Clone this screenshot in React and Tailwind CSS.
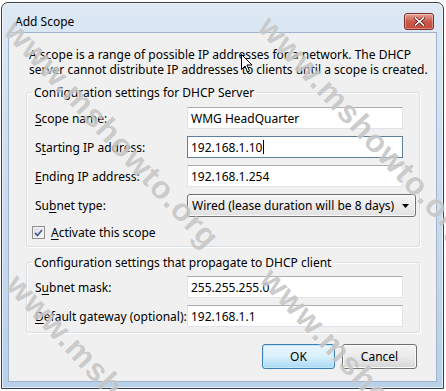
import React from 'react'

// Add Scope dialog (Windows 7 basic theme)

const Ul = ({ children }) => <span className="underline underline-offset-2">{children}</span>

const TextBox = ({ value, focused, caret }) => (
    <div
        className={
            'flex h-[22px] w-[216px] items-center bg-white pl-[3px] ' +
            (focused
                ? 'border border-[#5f7d9c]'
                : 'border border-[#e2e3ea] border-t-[#abadb3]')
        }
    >
        <span>{value}</span>
        {caret && <span className="ml-[1px] h-[14px] w-[1px] bg-black" />}
    </div>
)

const Row = ({ label, children, className = '' }) => (
    <div className={'flex items-center ' + className}>
        <div className="w-[152px]">{label}</div>
        {children}
    </div>
)

const Watermark = ({ className }) => (
    <span
        className={
            'absolute origin-top-left rotate-[47deg] whitespace-nowrap font-["Liberation_Sans",sans-serif] text-[32px] font-bold leading-none tracking-[1px] text-[#8c8c8c]/45 [text-shadow:0_0_1px_rgba(255,255,255,0.8)] ' +
            className
        }
    >
        www.mshowto.org
    </span>
)

export default function App() {
    return (
        <div className="relative h-[391px] w-[446px] overflow-hidden bg-white pl-[1px] pt-[2px] font-['Noto_Sans',sans-serif] text-[12px] leading-[15px] text-black">
            {/* window */}
            <div className="flex h-[387px] w-[443px] flex-col rounded-t-[7px] border border-[#3a3d42] bg-gradient-to-b from-[#dde8f4] via-[#cadcef] to-[#b9d0e9] shadow-[inset_0_0_0_1px_rgba(255,255,255,0.6)]">
                {/* title bar */}
                <div className="flex h-[29px] items-center justify-between pl-[13px] pr-[9px] pt-[7px]">
                    <span className="text-[12px] text-black">Add Scope</span>
                    <div className="flex h-[17px] w-[30px] items-center justify-center rounded-[3px] border border-[#7a3129] bg-gradient-to-b from-[#e6a399] via-[#c95a4c] to-[#c8483a] shadow-[inset_0_0_0_1px_rgba(255,255,255,0.35)]">
                        <svg width="11" height="9" viewBox="0 0 11 9">
                            <path d="M1.5 1 L9.5 8 M9.5 1 L1.5 8" stroke="#5b1d16" strokeWidth="3" strokeLinecap="square" />
                            <path d="M1.5 1 L9.5 8 M9.5 1 L1.5 8" stroke="#ffffff" strokeWidth="1.6" strokeLinecap="square" />
                        </svg>
                    </div>
                </div>

                {/* client area */}
                <div className="mx-[6px] flex flex-1 flex-col border border-[#9fb4cc] bg-[#f0f0f0]">
                    <p className="pl-[20px] pt-[14px]">
                        A scope is a range of possible IP addresses for a network. The DHCP
                        <br />
                        server cannot distribute IP addresses to clients until a scope is created.
                    </p>

                    <fieldset className="ml-[17px] mr-[16px] mt-[8px] rounded-[3px] border border-[#d5dfe5] pb-[6px] pt-[7px] shadow-[inset_1px_1px_0_#fff,1px_1px_0_#fff]">
                        <legend className="ml-[5px] px-[2px]">Configuration settings for DHCP Server</legend>
                        <div className="flex flex-col gap-[7px] pl-[8px]">
                            <Row label={<><Ul>S</Ul>cope name:</>}>
                                <TextBox value="WMG HeadQuarter" />
                            </Row>
                            <Row label={<>S<Ul>t</Ul>arting IP address:</>}>
                                <TextBox value="192.168.1.10" focused caret />
                            </Row>
                            <Row label={<><Ul>E</Ul>nding IP address:</>}>
                                <TextBox value="192.168.1.254" />
                            </Row>
                            <Row label={<>Su<Ul>b</Ul>net type:</>}>
                                <div className="flex h-[23px] w-[229px] items-center justify-between rounded-[3px] border border-[#707070] bg-gradient-to-b from-[#f6f6f6] via-[#ececec] to-[#e2e2e2] pl-[4px] pr-[6px] shadow-[inset_0_0_0_1px_#fcfcfc]">
                                    <span>Wired (lease duration will be 8 days)</span>
                                    <svg width="7" height="4" viewBox="0 0 7 4">
                                        <path d="M0 0 H7 L3.5 4 Z" fill="#000" />
                                    </svg>
                                </div>
                            </Row>
                        </div>
                        <div className="mt-[8px] flex items-center gap-[6px] pl-[5px]">
                            <div className="flex h-[13px] w-[13px] items-center justify-center border border-[#8e8f8f] bg-gradient-to-br from-[#dcdcdc] to-[#fbfbfb] shadow-[inset_0_0_0_1px_#f4f4f4]">
                                <svg width="9" height="8" viewBox="0 0 9 8">
                                    <path d="M1 4 L3.5 6.5 L8 1" fill="none" stroke="#4a5f97" strokeWidth="1.8" />
                                </svg>
                            </div>
                            <span>
                                <Ul>A</Ul>ctivate this scope
                            </span>
                        </div>
                    </fieldset>

                    <fieldset className="ml-[17px] mr-[16px] mt-[8px] rounded-[3px] border border-[#d5dfe5] pb-[5px] pt-[6px] shadow-[inset_1px_1px_0_#fff,1px_1px_0_#fff]">
                        <legend className="ml-[5px] px-[2px]">Configuration settings that propagate to DHCP client</legend>
                        <div className="flex flex-col gap-[7px] pl-[8px]">
                            <Row label={<>S<Ul>u</Ul>bnet mask:</>}>
                                <TextBox value="255.255.255.0" />
                            </Row>
                            <Row label={<><Ul>D</Ul>efault gateway (optional):</>}>
                                <TextBox value="192.168.1.1" />
                            </Row>
                        </div>
                    </fieldset>

                    <div className="mt-[11px] flex justify-end gap-[7px] pr-[19px]">
                        <button className="flex h-[25px] w-[73px] items-center justify-center rounded-[3px] border border-[#3c7fb1] bg-gradient-to-b from-[#eaf6fd] via-[#d9f0fc] to-[#a7d9f5] shadow-[inset_0_0_0_1px_#c5e8f9]">
                            OK
                        </button>
                        <button className="flex h-[25px] w-[75px] items-center justify-center rounded-[3px] border border-[#707070] bg-gradient-to-b from-[#f2f2f2] via-[#ebebeb] to-[#d6d6d6] shadow-[inset_0_0_0_1px_#fbfbfb]">
                            Cancel
                        </button>
                    </div>
                </div>
                <div className="h-[6px]" />
            </div>

            {/* watermark */}
            <div className="pointer-events-none absolute inset-0">
                <Watermark className="left-[22px] top-[14px]" />
                <Watermark className="left-[276px] top-[10px]" />
                <Watermark className="left-[24px] top-[268px]" />
                <Watermark className="left-[278px] top-[262px]" />
            </div>

            {/* mouse pointer */}
            <svg className="absolute left-[241px] top-[54px]" width="12" height="19" viewBox="0 0 12 19">
                <path d="M0.5 0.5 V15.5 L4 12 L6.5 18 L8.5 17 L6 11 H11 Z" fill="#fff" stroke="#000" strokeWidth="1" />
            </svg>
        </div>
    )
}
